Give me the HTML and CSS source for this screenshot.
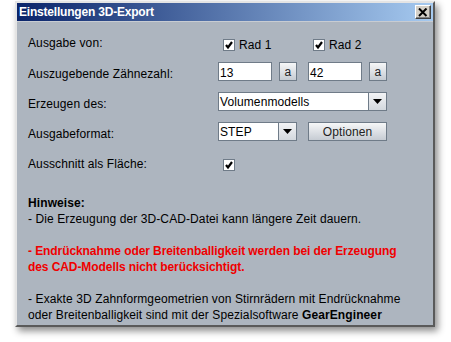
FILE: index.html
```html
<!DOCTYPE html>
<html>
<head>
<meta charset="utf-8">
<link rel="stylesheet" href="styles.css">
</head>
<body>
<div class="window">
  <div class="titlebar">
    <span class="title">Einstellungen 3D-Export</span>
    <span class="close"><svg width="10" height="9" viewBox="0 0 10 9"><path d="M1 0.5 L8.5 8 M8.5 0.5 L1 8" stroke="#000" stroke-width="2" fill="none"/></svg></span>
  </div>
  <div class="content">
    <div class="form">
      <div class="row">
        <div class="label">Ausgabe von:</div>
        <div class="ctrls">
          <div class="check-group col1"><span class="cb"><svg width="10" height="10" viewBox="0 0 10 10"><path d="M2 5 L4 7.5 L8 2" stroke="#000" stroke-width="2.2" fill="none"/></svg></span><span class="cbtext">Rad 1</span></div>
          <div class="check-group"><span class="cb"><svg width="10" height="10" viewBox="0 0 10 10"><path d="M2 5 L4 7.5 L8 2" stroke="#000" stroke-width="2.2" fill="none"/></svg></span><span class="cbtext">Rad 2</span></div>
        </div>
      </div>
      <div class="row">
        <div class="label">Auszugebende Zähnezahl:</div>
        <div class="ctrls">
          <div class="pair col1"><span class="field">13</span><span class="btn small">a</span></div>
          <div class="pair"><span class="field">42</span><span class="btn small">a</span></div>
        </div>
      </div>
      <div class="row">
        <div class="label">Erzeugen des:</div>
        <div class="ctrls">
          <div class="combo wide"><span class="combo-text">Volumenmodells</span><span class="arrow"><svg width="9" height="5" viewBox="0 0 9 5"><path d="M0 0 H9 L4.5 5 Z" fill="#000"/></svg></span></div>
        </div>
      </div>
      <div class="row">
        <div class="label">Ausgabeformat:</div>
        <div class="ctrls">
          <div class="combo narrow col1"><span class="combo-text">STEP</span><span class="arrow"><svg width="9" height="5" viewBox="0 0 9 5"><path d="M0 0 H9 L4.5 5 Z" fill="#000"/></svg></span></div>
          <span class="btn opt">Optionen</span>
        </div>
      </div>
      <div class="row">
        <div class="label">Ausschnitt als Fläche:</div>
        <div class="ctrls">
          <div class="check-group"><span class="cb"><svg width="10" height="10" viewBox="0 0 10 10"><path d="M2 5 L4 7.5 L8 2" stroke="#000" stroke-width="2.2" fill="none"/></svg></span></div>
        </div>
      </div>
    </div>
    <div class="notes">
      <div class="bold">Hinweise:</div>
      <div>- Die Erzeugung der 3D-CAD-Datei kann längere Zeit dauern.</div>
      <div class="blank"></div>
      <div class="red">- Endrücknahme oder Breitenballigkeit werden bei der Erzeugung des CAD-Modells nicht berücksichtigt.</div>
      <div class="blank"></div>
      <div>- Exakte 3D Zahnformgeometrien von Stirnrädern mit Endrücknahme</div>
      <div class="last">oder Breitenballigkeit sind mit der Spezialsoftware <b>GearEngineer</b></div>
    </div>
  </div>
</div>
</body>
</html>
```
FILE: styles.css
```css
html, body {
  margin: 0;
  padding: 0;
  background: #ffffff;
}
body {
  width: 451px;
  height: 342px;
  overflow: hidden;
  font-family: "Liberation Sans", Arial, sans-serif;
  font-size: 12px;
  color: #000;
}
.window {
  box-sizing: border-box;
  margin: 1px 0 0 15px;
  width: 420px;
  height: 326px;
  border: 2px solid;
  border-color: #e4e4e4 #5a5a5a #5a5a5a #e4e4e4;
  background: #adb5bf;
  box-shadow: 3px 4px 7px rgba(0, 0, 0, 0.45);
  display: flex;
  flex-direction: column;
  overflow: hidden;
}
.titlebar {
  height: 18px;
  flex: none;
  display: flex;
  align-items: center;
  justify-content: space-between;
  background: linear-gradient(to right, #0a246a, #a6caf0);
  border-bottom: 1px solid #c8ccd2;
  padding: 0 2px;
}
.title {
  font-weight: bold;
  color: #fff;
  font-size: 12px;
  letter-spacing: -0.2px;
  line-height: 18px;
}
.close {
  box-sizing: border-box;
  width: 16px;
  height: 14px;
  background: #d4d0c8;
  border: 1px solid;
  border-color: #fff #404040 #404040 #fff;
  box-shadow: inset -1px -1px 0 #808080;
  display: flex;
  align-items: center;
  justify-content: center;
}
.close svg { display: block; margin-left: -1px; }
.content {
  flex: 1;
  padding: 10px 0 0 11px;
  overflow: hidden;
  letter-spacing: 0.1px;
}
.form {
  display: flex;
  flex-direction: column;
}
.row {
  height: 30px;
  display: flex;
  align-items: flex-start;
}
.label {
  width: 190px;
  flex: none;
  line-height: 19px;
  padding-top: 3px;
}
.row:first-child .label { padding-top: 2px; }
.ctrls {
  display: flex;
  align-items: flex-start;
}
.col1 { width: 90px; flex: none; }
.check-group {
  display: flex;
  align-items: center;
  padding: 7px 0 0 5px;
  box-sizing: border-box;
}
.cb {
  box-sizing: border-box;
  width: 12px;
  height: 12px;
  background: #fff;
  border: 1px solid #6f7b88;
  display: flex;
  align-items: center;
  justify-content: center;
}
.cb svg { display: block; }
.cbtext {
  margin-left: 4px;
  line-height: 12px;
}
.pair {
  display: flex;
  gap: 7px;
}
.field {
  box-sizing: border-box;
  width: 54px;
  height: 19px;
  background: #fff;
  border: 1px solid #6f7b88;
  padding: 3px 0 0 1px;
  line-height: 14px;
}
.btn {
  box-sizing: border-box;
  height: 19px;
  border: 1px solid #6f7b88;
  background: linear-gradient(to bottom, #f6f7f8, #d9dde2 60%, #c6ccd3);
  display: flex;
  align-items: center;
  justify-content: center;
  color: #222;
  padding-top: 1px;
}
.btn.small { width: 18px; }
.btn.opt { width: 79px; }
.combo {
  box-sizing: border-box;
  height: 19px;
  display: flex;
  border: 1px solid #6f7b88;
  background: #fff;
}
.combo.wide { width: 169px; }
.combo.narrow { width: 79px; flex: none; margin-right: 11px; }
.combo-text {
  flex: 1;
  padding: 2px 0 0 1px;
  line-height: 14px;
}
.arrow {
  width: 17px;
  flex: none;
  border-left: 1px solid #6f7b88;
  background: linear-gradient(to bottom, #f2f3f5, #d3d8de);
  display: flex;
  align-items: center;
  justify-content: center;
}
.arrow svg { display: block; }
.notes {
  margin-top: 13px;
  line-height: 16px;
  width: 390px;
}
.notes .bold { font-weight: bold; }
.notes .blank { height: 16px; }
.notes .red { color: #f00000; font-weight: bold; letter-spacing: -0.08px; width: 375px; }
.notes .last { white-space: nowrap; }
```
